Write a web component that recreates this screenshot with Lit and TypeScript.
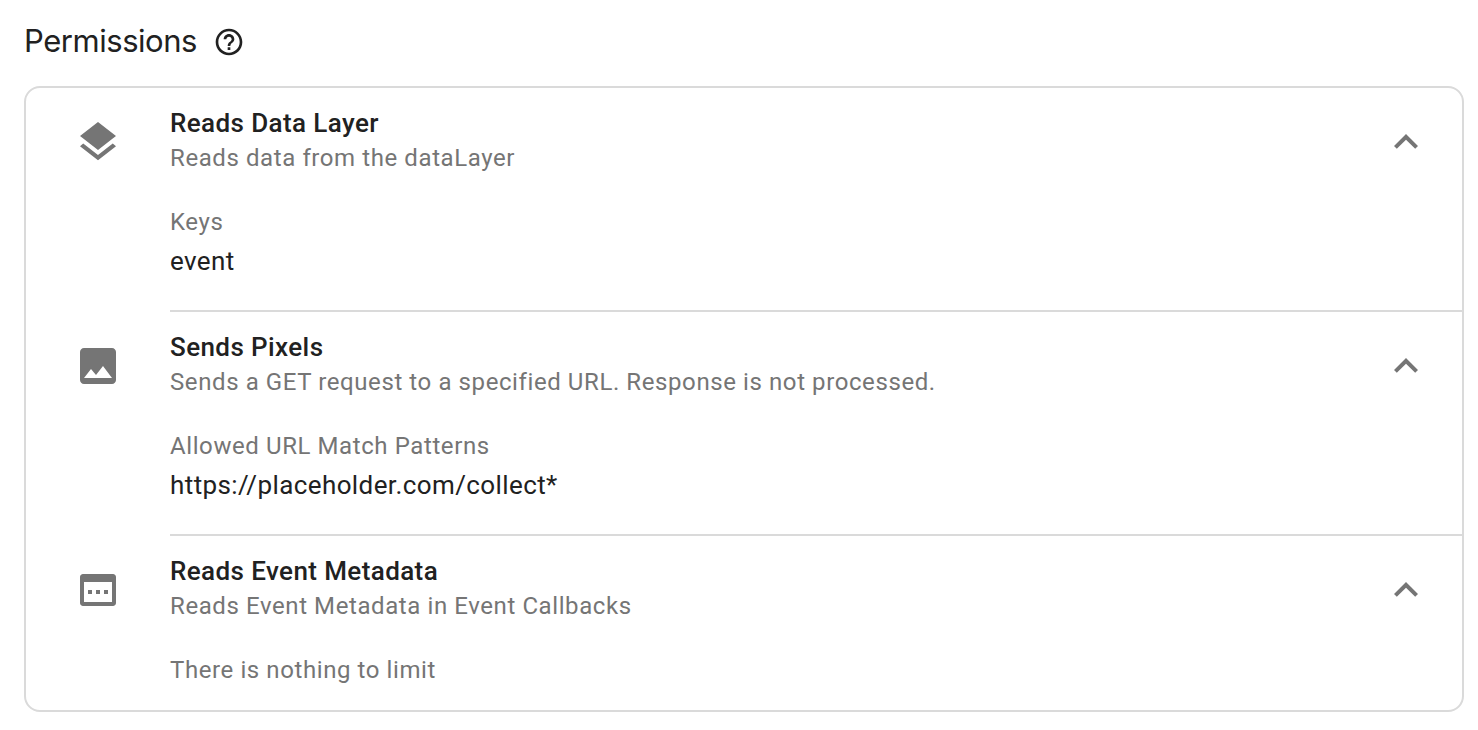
import { LitElement, html, css, svg } from "lit";
import { customElement, property } from "lit/decorators.js";

const ICONS: Record<string, string> = {
  layers:
    "M11.99 18.54l-7.37-5.73L3 14.07l9 7 9-7-1.63-1.27-7.38 5.74zM12 16l7.36-5.73L21 9l-9-7-9 7 1.63 1.27L12 16z",
  image:
    "M21 19V5c0-1.1-.9-2-2-2H5c-1.1 0-2 .9-2 2v14c0 1.1.9 2 2 2h14c1.1 0 2-.9 2-2zM5 18l3.5-4.5 2.5 3L14.5 12l4.5 6H5z",
  event:
    "M19.5 4h-15C3.67 4 3 4.67 3 5.5v13c0 .83.67 1.5 1.5 1.5h15c.83 0 1.5-.67 1.5-1.5v-13C21 4.67 20.33 4 19.5 4zM19 18H5V8h14v10zM7 12h2v2H7zM11 12h2v2h-2zM15 12h2v2h-2z",
  less: "M12 8l-6 6 1.41 1.41L12 10.83l4.59 4.58L18 14z",
  help:
    "M11 18h2v-2h-2v2zm1-16C6.48 2 2 6.48 2 12s4.48 10 10 10 10-4.48 10-10S17.52 2 12 2zm0 18c-4.41 0-8-3.59-8-8s3.59-8 8-8 8 3.59 8 8-3.59 8-8 8zm0-14c-2.21 0-4 1.79-4 4h2c0-1.1.9-2 2-2s2 .9 2 2c0 2-3 1.75-3 5h2c0-2.25 3-2.5 3-5 0-2.21-1.79-4-4-4z",
};

@customElement("md-icon")
class MdIcon extends LitElement {
  @property() name = "";
  static styles = css`
    :host { display: block; flex: none; width: 48px; height: 48px; }
    svg { display: block; width: 100%; height: 100%; fill: currentColor; }
  `;
  render() {
    return html`<svg viewBox="0 0 24 24" aria-hidden="true">${svg`<path fill-rule="evenodd" d=${ICONS[this.name]}></path>`}</svg>`;
  }
}

interface Permission {
  icon: string;
  title: string;
  description: string;
  label: string;
  value?: string;
}

const PERMISSIONS: Permission[] = [
  { icon: "layers", title: "Reads Data Layer", description: "Reads data from the dataLayer", label: "Keys", value: "event" },
  {
    icon: "image",
    title: "Sends Pixels",
    description: "Sends a GET request to a specified URL. Response is not processed.",
    label: "Allowed URL Match Patterns",
    value: "https://placeholder.com/collect*",
  },
  { icon: "event", title: "Reads Event Metadata", description: "Reads Event Metadata in Event Callbacks", label: "There is nothing to limit" },
];

@customElement("app-root")
class AppRoot extends LitElement {
  static styles = css`
    :host {
      display: block;
      box-sizing: border-box;
      height: 730px;
      padding: 22px 14px 0 24px;
      background: #fff;
      color: #212121;
      font-family: Roboto, sans-serif;
    }
    .heading { display: flex; align-items: center; gap: 16px; height: 40px; margin-bottom: 24px; }
    h1 { margin: 0; padding-bottom: 2px; font: 400 31px/38px Inter, sans-serif; letter-spacing: -0.46px; }
    .help { width: 32px; height: 32px; }
    .card { border: 2px solid #dadada; border-radius: 16px; }
    .row { display: flex; padding-left: 48px; }
    .row > md-icon, .toggle { margin-top: 30px; color: #757575; }
    .body {
      flex: 1;
      display: flex;
      box-sizing: border-box;
      height: 224px;
      margin-left: 48px;
      padding-right: 32px;
      border-bottom: 2px solid #dadada;
    }
    .row:last-child .body { height: 174px; border-bottom: 0; }
    .text { flex: 1; padding-top: 18px; }
    .title { font-size: 26px; line-height: 34px; font-weight: 500; letter-spacing: 0.4px; }
    .muted { font-size: 24px; line-height: 36px; color: #757575; letter-spacing: 0.59px; }
    .label { margin-top: 28px; }
    .value { font-size: 26px; line-height: 42px; letter-spacing: 0.4px; }
  `;
  render() {
    return html`
      <div class="heading">
        <h1>Permissions</h1>
        <md-icon class="help" name="help"></md-icon>
      </div>
      <div class="card">
        ${PERMISSIONS.map(
          (p) => html`<section class="row">
            <md-icon name=${p.icon}></md-icon>
            <div class="body">
              <div class="text">
                <div class="title">${p.title}</div>
                <div class="muted">${p.description}</div>
                <div class="muted label">${p.label}</div>
                ${p.value ? html`<div class="value">${p.value}</div>` : ""}
              </div>
              <md-icon class="toggle" name="less"></md-icon>
            </div>
          </section>`
        )}
      </div>
    `;
  }
}
